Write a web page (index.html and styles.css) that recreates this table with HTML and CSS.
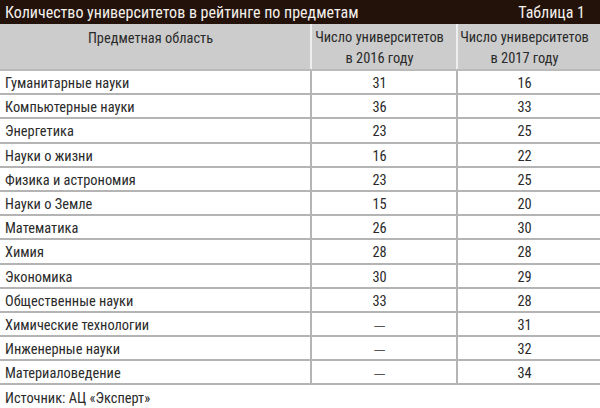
FILE: index.html
```html
<!DOCTYPE html>
<html lang="ru">
<head>
<meta charset="utf-8">
<link rel="stylesheet" href="styles.css">
</head>
<body>
<div class="page">
  <div class="title">
    <span>Количество университетов в рейтинге по предметам</span>
    <span>Таблица 1</span>
  </div>
  <table class="tbl">
    <thead>
      <tr>
        <th class="c1">Предметная область</th>
        <th class="c2">Число университетов<br>в 2016 году</th>
        <th class="c3">Число университетов<br>в 2017 году</th>
      </tr>
    </thead>
    <tbody>
      <tr><td>Гуманитарные науки</td><td>31</td><td>16</td></tr>
      <tr><td>Компьютерные науки</td><td>36</td><td>33</td></tr>
      <tr><td>Энергетика</td><td>23</td><td>25</td></tr>
      <tr><td>Науки о жизни</td><td>16</td><td>22</td></tr>
      <tr><td>Физика и астрономия</td><td>23</td><td>25</td></tr>
      <tr><td>Науки о Земле</td><td>15</td><td>20</td></tr>
      <tr><td>Математика</td><td>26</td><td>30</td></tr>
      <tr><td>Химия</td><td>28</td><td>28</td></tr>
      <tr><td>Экономика</td><td>30</td><td>29</td></tr>
      <tr><td>Общественные науки</td><td>33</td><td>28</td></tr>
      <tr><td>Химические технологии</td><td class="dash">—</td><td>31</td></tr>
      <tr><td>Инженерные науки</td><td class="dash">—</td><td>32</td></tr>
      <tr><td>Материаловедение</td><td class="dash">—</td><td>34</td></tr>
    </tbody>
  </table>
  <div class="source">Источник: АЦ «Эксперт»</div>
</div>
</body>
</html>
```

FILE: styles.css
```css
html, body {
  margin: 0;
  padding: 0;
  background: #ffffff;
}
.page {
  width: 600px;
  height: 408px;
  font-family: "Roboto Condensed", "Roboto", sans-serif;
  color: #2a2a2a;
  overflow: hidden;
}
.title {
  height: 24px;
  background: #231209;
  color: #f4f0ec;
  display: flex;
  justify-content: space-between;
  align-items: center;
  padding: 0 15px 0 5px;
  font-size: 16px;
}
.tbl {
  width: 600px;
  border-collapse: collapse;
  table-layout: fixed;
  font-size: 14.4px;
}
.tbl th {
  background: #cccccc;
  font-weight: normal;
  height: 43px;
  padding: 3px 9px 0 0;
  vertical-align: top;
  line-height: 21px;
  text-align: center;
  box-sizing: border-box;
  border-bottom: 2px solid #bbbbbb;
  border-left: 2px solid #eeeeee;
}
.tbl th.c1 { width: 311px; border-left: none; padding-top: 4px; }
.tbl th.c2 { width: 146px; }
.tbl td {
  height: 24.2px;
  box-sizing: border-box;
  padding: 4px 9px 0 0;
  vertical-align: top;
  text-align: center;
  border-bottom: 2px solid #b4b4b4;
  border-left: 2px solid #b4b4b4;
  line-height: 17px;
}
.tbl td:first-child {
  text-align: left;
  padding-left: 5px;
  border-left: none;
}
.tbl td.dash {
  color: #555555;
  font-family: "DejaVu Sans Condensed", sans-serif;
  font-size: 13px;
}
.source {
  padding: 5px 0 0 5px;
  font-size: 14.4px;
}
```
